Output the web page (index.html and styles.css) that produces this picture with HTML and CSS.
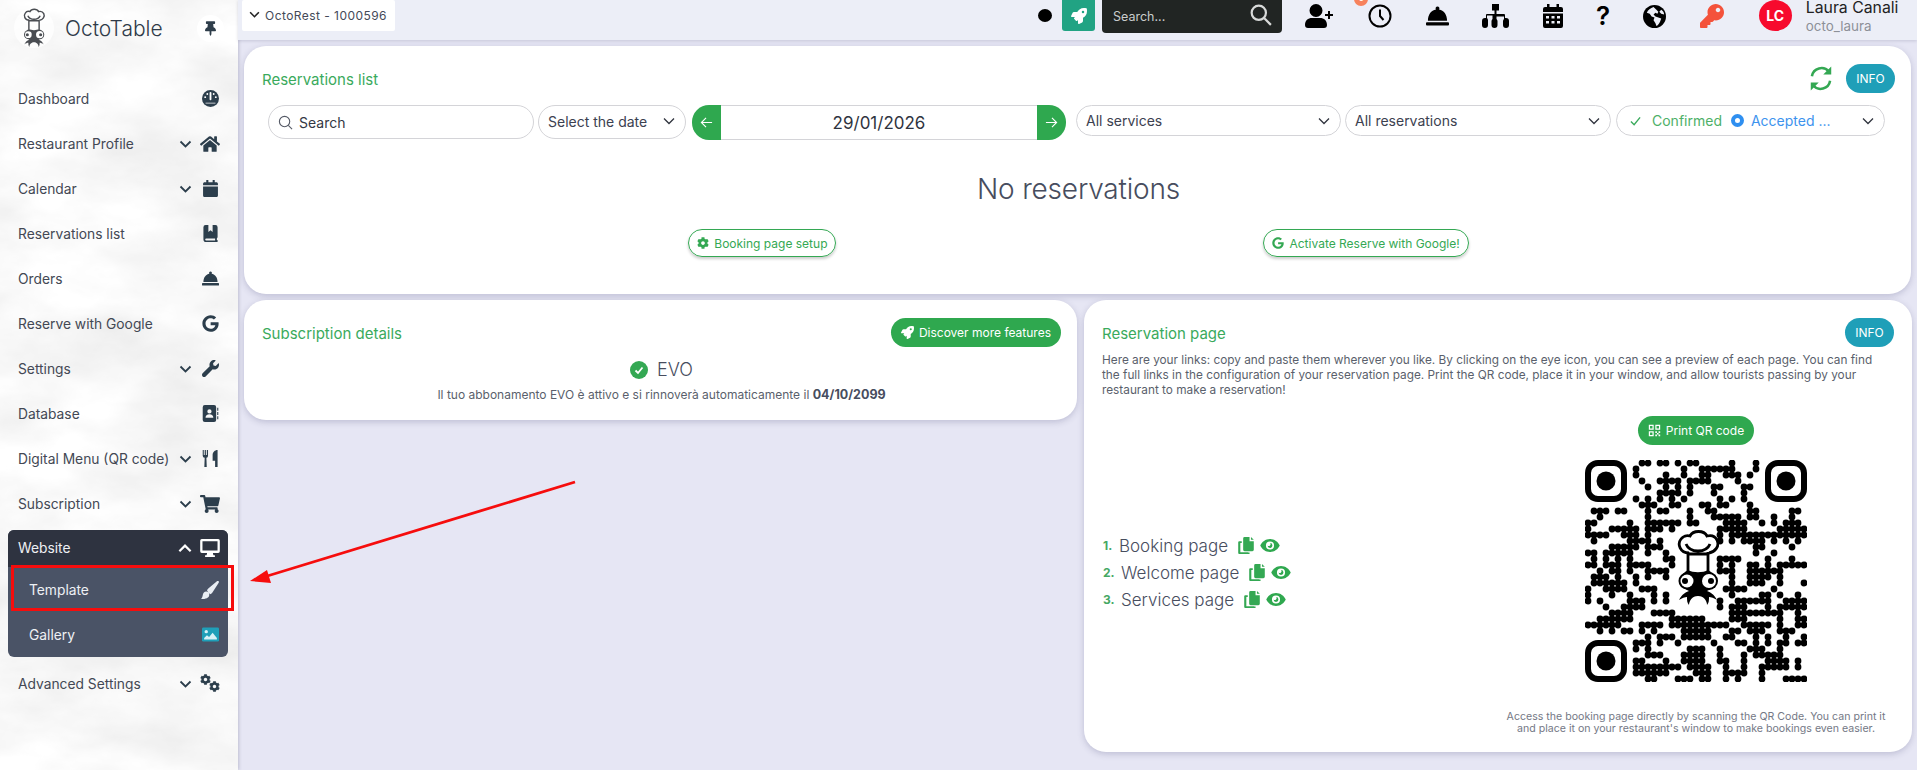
FILE: index.html
```html
<!DOCTYPE html>
<html lang="en">
<head>
<meta charset="utf-8">
<title>OctoTable</title>
<link rel="stylesheet" href="styles.css">
</head>
<body>
<svg class="defs" aria-hidden="true">
  <filter id="photo-grain" x="0" y="0" width="100%" height="100%">
    <feTurbulence type="fractalNoise" baseFrequency="0.008 0.016" numOctaves="5" seed="7"/>
    <feColorMatrix values="0.3 0 0 0 0.79  0.3 0 0 0 0.79  0.3 0 0 0 0.79  0 0 0 0 1"/>
  </filter>
  <symbol id="i-home" viewBox="0 0 576 512"><path d="M280.37 148.26L96 300.11V464a16 16 0 0 0 16 16l112.06-.29a16 16 0 0 0 15.92-16V368a16 16 0 0 1 16-16h64a16 16 0 0 1 16 16v95.64a16 16 0 0 0 16 16.05L464 480a16 16 0 0 0 16-16V300L295.67 148.26a12.19 12.19 0 0 0-15.3 0zM571.6 251.47L488 182.56V44.05a12 12 0 0 0-12-12h-56a12 12 0 0 0-12 12v72.61L318.47 43a48 48 0 0 0-61 0L4.34 251.47a12 12 0 0 0-1.6 16.9l25.5 31A12 12 0 0 0 45.15 301l235.22-193.74a12.19 12.19 0 0 1 15.3 0L530.9 301a12 12 0 0 0 16.9-1.6l25.5-31a12 12 0 0 0-1.7-16.93z"/></symbol>
  <symbol id="i-cal" viewBox="0 0 448 512"><path d="M12 192h424c6.6 0 12 5.4 12 12v260c0 26.5-21.5 48-48 48H48c-26.5 0-48-21.5-48-48V204c0-6.6 5.4-12 12-12zm436-44v-36c0-26.5-21.5-48-48-48h-48V12c0-6.6-5.4-12-12-12h-40c-6.6 0-12 5.4-12 12v52H160V12c0-6.6-5.4-12-12-12h-40c-6.6 0-12 5.4-12 12v52H48C21.5 64 0 85.5 0 112v36c0 6.6 5.4 12 12 12h424c6.6 0 12-5.4 12-12z"/></symbol>
  <symbol id="i-google" viewBox="0 0 488 512"><path d="M488 261.8C488 403.3 391.1 504 248 504 110.8 504 0 393.2 0 256S110.8 8 248 8c66.8 0 123 24.5 166.3 64.9l-67.5 64.9C258.5 52.6 94.3 116.6 94.3 256c0 86.5 69.1 156.6 153.7 156.6 98.2 0 135-70.4 140.8-106.9H248v-85.3h236.1c2.3 12.7 3.9 24.9 3.9 41.4z"/></symbol>
  <symbol id="i-wrench" viewBox="0 0 512 512"><path d="M507.73 109.1c-2.24-9.03-13.54-12.09-20.12-5.51l-74.36 74.36-67.88-11.31-11.31-67.88 74.36-74.36c6.62-6.62 3.43-17.9-5.66-20.16-47.38-11.74-99.55.91-136.58 37.93-39.64 39.64-50.55 97.1-34.05 147.2L18.74 402.76c-24.99 24.99-24.99 65.51 0 90.5 24.99 24.99 65.51 24.99 90.5 0l213.21-213.21c50.12 16.71 107.47 5.68 147.37-34.22 37.07-37.07 49.7-89.32 37.91-136.73z"/></symbol>
  <symbol id="i-cart" viewBox="0 0 576 512"><path d="M528.12 301.319l47.273-208C578.806 78.301 567.391 64 551.99 64H159.208l-9.166-44.81C147.758 8.021 137.93 0 126.529 0H24C10.745 0 0 10.745 0 24v16c0 13.255 10.745 24 24 24h69.883l70.248 343.435C147.325 417.1 136 435.222 136 456c0 30.928 25.072 56 56 56s56-25.072 56-56c0-15.674-6.447-29.835-16.824-40h209.647C430.447 426.165 424 440.326 424 456c0 30.928 25.072 56 56 56s56-25.072 56-56c0-22.172-12.888-41.332-31.579-50.405l5.517-24.276c3.413-15.018-8.002-29.319-23.403-29.319H218.117l-6.545-32h293.145c11.206 0 20.92-7.754 23.403-18.681z"/></symbol>
  <symbol id="i-cog" viewBox="0 0 512 512"><path d="M487.4 315.7l-42.6-24.6c4.3-23.2 4.3-47 0-70.2l42.6-24.6c4.9-2.8 7.1-8.6 5.5-14-11.1-35.6-30-67.8-54.7-94.6-3.8-4.1-10-5.1-14.8-2.3L380.8 110c-17.9-15.4-38.5-27.3-60.8-35.1V25.8c0-5.6-3.9-10.5-9.4-11.7-36.7-8.2-74.3-7.8-109.2 0-5.5 1.2-9.4 6.1-9.4 11.7V75c-22.2 7.9-42.8 19.8-60.8 35.1L88.7 85.5c-4.9-2.8-11-1.9-14.8 2.3-24.7 26.7-43.6 58.9-54.7 94.6-1.7 5.4.6 11.2 5.5 14L67.3 221c-4.3 23.2-4.3 47 0 70.2l-42.6 24.6c-4.9 2.8-7.1 8.6-5.5 14 11.1 35.6 30 67.8 54.7 94.6 3.8 4.1 10 5.1 14.8 2.3l42.6-24.6c17.9 15.4 38.5 27.3 60.8 35.1v49.2c0 5.6 3.9 10.5 9.4 11.7 36.7 8.2 74.3 7.8 109.2 0 5.5-1.2 9.4-6.1 9.4-11.7v-49.2c22.2-7.9 42.8-19.8 60.8-35.1l42.6 24.6c4.9 2.8 11 1.9 14.8-2.3 24.7-26.7 43.6-58.9 54.7-94.6 1.5-5.5-.7-11.3-5.6-14.1zM256 336c-44.1 0-80-35.9-80-80s35.9-80 80-80 80 35.9 80 80-35.9 80-80 80z"/></symbol>
  <symbol id="i-pin" viewBox="0 0 384 512"><path d="M298.028 214.267L285.793 96H328c13.255 0 24-10.745 24-24V24c0-13.255-10.745-24-24-24H56C42.745 0 32 10.745 32 24v48c0 13.255 10.745 24 24 24h42.207L85.972 214.267C37.465 236.82 0 277.261 0 328c0 13.255 10.745 24 24 24h136v104.007c0 1.242.289 2.467.845 3.578l24 48c2.941 5.882 11.364 5.893 14.311 0l24-48a8.008 8.008 0 0 0 .845-3.578V352h136c13.255 0 24-10.745 24-24-.001-51.183-37.983-91.42-85.973-113.733z"/></symbol>
  <symbol id="i-rocket" viewBox="0 0 512 512"><path d="M505.12 19.09c-1.19-5.53-6.66-11-12.21-12.19C460.72 0 435.51 0 410.41 0 307.18 0 245.27 55.2 199.05 128H94.84c-16.35.02-35.56 11.88-42.89 26.48L2.52 253.3A28.4 28.4 0 0 0 0 264a24 24 0 0 0 24 24h103.81l-22.47 22.47c-11.37 11.36-13 32.26 0 45.25l50.9 50.9c11.16 11.19 32.16 13.16 45.28 0L224 384.16V488a24 24 0 0 0 24 24 28.56 28.56 0 0 0 10.71-2.52l98.73-49.39c14.63-7.3 26.5-26.5 26.5-42.86V312.8c72.6-46.31 128.04-108.41 128.04-211.1.09-25.2.09-50.4-6.86-82.61zM384.04 168a40 40 0 1 1 40-40 40 40 0 0 1-40 40z"/></symbol>
  <symbol id="i-key" viewBox="0 0 512 512"><path d="M512 176.001C512 273.203 433.202 352 336 352c-11.22 0-22.19-1.062-32.827-3.069l-24.012 27.014A23.999 23.999 0 0 1 261.223 384H224v40c0 13.255-10.745 24-24 24h-40v40c0 13.255-10.745 24-24 24H24c-13.255 0-24-10.745-24-24v-78.059c0-6.365 2.529-12.47 7.029-16.971l161.802-161.802C163.108 213.814 160 195.271 160 176 160 78.798 238.797.001 335.999 0 433.488-.001 512 78.511 512 176.001zM336 128c0 26.51 21.49 48 48 48s48-21.49 48-48-21.49-48-48-48-48 21.49-48 48z"/></symbol>
  <symbol id="i-bell" viewBox="0 0 24 20"><path d="M12 0a2 2 0 0 1 1.6 3.2C18.600 4 22 8.500 22 15H2C2 8.500 5.400 4 10.400 3.200A2 2 0 0 1 12 0zM1 16.500h22a1 1 0 0 1 1 1V19a1 1 0 0 1-1 1H1a1 1 0 0 1-1-1v-1.500a1 1 0 0 1 1-1z"/></symbol>
  <symbol id="i-dash" viewBox="0 0 24 24"><circle cx="12" cy="12" r="12"/><path d="M12 4v9M7.500 5.500v.1M16.500 5.500v.1M4.500 10v.1M19.500 10v.1" stroke="#fff" stroke-width="2.600" stroke-linecap="round" fill="none" /><path d="M5 19h14v-1H5z" fill="#fff"/></symbol>
  <symbol id="i-book" viewBox="0 0 20 24"><path d="M3 0h4v10l3-2.500 3 2.500V0h4a3 3 0 0 1 3 3v14a2 2 0 0 1-1 1.700V21h1v3H4a4 4 0 0 1-4-4V3a3 3 0 0 1 3-3zM4 19a1.500 1.500 0 0 0 0 3h12.500v-3z"/></symbol>
  <symbol id="i-address" viewBox="0 0 22 24"><path d="M3 0h13a3 3 0 0 1 3 3v18a3 3 0 0 1-3 3H3a3 3 0 0 1-3-3V3a3 3 0 0 1 3-3zm6.500 6a3 3 0 1 0 0 6 3 3 0 0 0 0-6zM4 18h11c0-3-2-5-5.500-5S4 15 4 18z"/><path d="M20.500 4h1.500v4h-1.500zm0 6h1.500v4h-1.500zm0 6h1.500v4h-1.500z"/></symbol>
  <symbol id="i-utensils" viewBox="0 0 22 24"><path d="M0 0h1.500v7h1.300V0h1.700v7h1.300V0H7.500v8a3 3 0 0 1-2.300 3l.5 13H2.300l.5-13A3 3 0 0 1 0 8zM21 0v24h-3.500v-9H14V7c0-4 3-7 7-7z"/></symbol>
  <symbol id="i-desktop" viewBox="0 0 24 22"><path fill-rule="evenodd" d="M2 0h20a2 2 0 0 1 2 2v13a2 2 0 0 1-2 2h-6.500l.7 3h1.800v2H6v-2h1.800l.7-3H2a2 2 0 0 1-2-2V2a2 2 0 0 1 2-2zm.8 2.800v11.400h18.400V2.800z"/></symbol>
  <symbol id="i-brush" viewBox="0 0 24 24"><path d="M23.500.4c.6.5.5 1.500-.1 2.300L15 15.500c-.8 1.100-1.800 1.800-3 2L8 12.700c.3-1.200 1.100-2.100 2.100-2.900L21.200.4c.8-.6 1.700-.5 2.300 0zM7 14c2.500.1 4.200 1.800 4 4.500C10.800 22.500 6.500 24 0 24c1.500-1.500 2-2.800 2.300-5C2.700 16 4.500 14 7 14z"/></symbol>
  <symbol id="i-image" viewBox="0 0 24 20"><rect width="24" height="20" rx="2" fill="#1f9fb8"/><circle cx="6" cy="6" r="2.400" fill="#d8f1f6"/><path d="M3 17v-2l4-4 3 2.500 5-6 6 7.500v2z" fill="#d8f1f6"/></symbol>
  <symbol id="i-copy" viewBox="0 0 22 24"><path d="M9 0h7v6h6v12a2 2 0 0 1-2 2H9a2 2 0 0 1-2-2V2a2 2 0 0 1 2-2zM18 0l4 4h-4z"/><path d="M1.500 6H5v2.500H3v13h11V22h2v2H1.500A1.500 1.500 0 0 1 0 22.500v-15A1.500 1.500 0 0 1 1.500 6z"/></symbol>
  <symbol id="i-eye" viewBox="0 0 24 16"><path fill-rule="evenodd" d="M12 0c5.500 0 10 3.500 12 8-2 4.500-6.500 8-12 8S2 12.500 0 8c2-4.500 6.500-8 12-8zm0 3a5 5 0 1 0 0 10 5 5 0 0 0 0-10zm0 2a3 3 0 1 1-3 3 1.600 1.600 0 0 0 3-3z"/></symbol>
  <symbol id="i-chef" viewBox="0 0 42 78">
    <path d="M12 24C3 24 0 15 4 10c2-3 6-4 9-3 3-6 14-6 17 0 4-1 8 0 10 4 3 6-2 12-8 13" fill="none" stroke="currentColor" stroke-width="2.800"/>
    <path d="M9 15c2 5 6 7 12 7s10-2 12-7M11 23v19M31 23v19M11 25h20" fill="none" stroke="currentColor" stroke-width="2.800"/>
    <path d="M11 41c5 3 15 3 20 0 7 3 9 12 5 17-2 2-4 3-6 4 3 1 7 3 10 9-3-2-6-3-8-3 0 3 0 6-2 8 0-4-3-9-9-9s-9 5-9 9c-2-2-2-5-2-8-2 0-5 1-8 3 3-6 7-8 10-9-2-1-4-2-6-4-4-5-2-14 5-17z" fill="currentColor"/>
    <circle cx="10" cy="52" r="8.500" fill="currentColor"/><circle cx="10" cy="52" r="6.500" fill="#fff"/><circle cx="8" cy="52" r="3" fill="currentColor"/>
    <circle cx="32" cy="52" r="9" fill="currentColor"/><circle cx="32" cy="52" r="7" fill="#fff"/><circle cx="34" cy="52" r="3" fill="currentColor"/>
  </symbol>
</svg>

<div class="app">
  <aside class="sidebar">
    <svg class="side-photo" aria-hidden="true"><rect width="100%" height="100%" filter="url(#photo-grain)"/></svg>
    <div class="brand">
      <span class="brand-mark"><svg class="brand-chef"><use href="#i-chef"/></svg></span>
      <span class="brand-name">OctoTable</span>
      <span class="pin"><svg class="pin-icon"><use href="#i-pin"/></svg></span>
    </div>
    <nav class="nav">
      <a class="nav-item"><span class="nav-label">Dashboard</span><span class="nav-icon"><svg class="ic-17"><use href="#i-dash"/></svg></span></a>
      <a class="nav-item"><span class="nav-label">Restaurant Profile</span><svg class="chev" viewBox="0 0 12 8"><path d="M1 1.500l5 5 5-5"/></svg><span class="nav-icon"><svg class="ic-19"><use href="#i-home"/></svg></span></a>
      <a class="nav-item"><span class="nav-label">Calendar</span><svg class="chev" viewBox="0 0 12 8"><path d="M1 1.500l5 5 5-5"/></svg><span class="nav-icon"><svg class="ic-17"><use href="#i-cal"/></svg></span></a>
      <a class="nav-item"><span class="nav-label">Reservations list</span><span class="nav-icon"><svg class="ic-17"><use href="#i-book"/></svg></span></a>
      <a class="nav-item"><span class="nav-label">Orders</span><span class="nav-icon"><svg class="ic-17"><use href="#i-bell"/></svg></span></a>
      <a class="nav-item"><span class="nav-label">Reserve with Google</span><span class="nav-icon"><svg class="ic-17"><use href="#i-google"/></svg></span></a>
      <a class="nav-item"><span class="nav-label">Settings</span><svg class="chev" viewBox="0 0 12 8"><path d="M1 1.500l5 5 5-5"/></svg><span class="nav-icon"><svg class="ic-17"><use href="#i-wrench"/></svg></span></a>
      <a class="nav-item"><span class="nav-label">Database</span><span class="nav-icon"><svg class="ic-17"><use href="#i-address"/></svg></span></a>
      <a class="nav-item"><span class="nav-label">Digital Menu (QR code)</span><svg class="chev" viewBox="0 0 12 8"><path d="M1 1.500l5 5 5-5"/></svg><span class="nav-icon"><svg class="ic-17"><use href="#i-utensils"/></svg></span></a>
      <a class="nav-item"><span class="nav-label">Subscription</span><svg class="chev" viewBox="0 0 12 8"><path d="M1 1.500l5 5 5-5"/></svg><span class="nav-icon"><svg class="ic-19"><use href="#i-cart"/></svg></span></a>
      <div class="nav-group">
        <a class="group-head"><span class="nav-label">Website</span><svg class="chev chev-light" viewBox="0 0 12 8"><path d="M1 6.500l5-5 5 5"/></svg><span class="nav-icon"><svg class="ic-19"><use href="#i-desktop"/></svg></span></a>
        <a class="group-sub"><span class="nav-label">Template</span><span class="nav-icon"><svg class="ic-18"><use href="#i-brush"/></svg></span></a>
        <a class="group-sub"><span class="nav-label">Gallery</span><span class="nav-icon"><svg class="ic-17"><use href="#i-image"/></svg></span></a>
      </div>
      <a class="nav-item"><span class="nav-label">Advanced Settings</span><svg class="chev" viewBox="0 0 12 8"><path d="M1 1.500l5 5 5-5"/></svg><span class="nav-icon nav-cogs"><svg class="cog-a"><use href="#i-cog"/></svg><svg class="cog-b"><use href="#i-cog"/></svg></span></a>
    </nav>
  </aside>

  <div class="main">
    <header class="topbar">
      <div class="chip"><svg class="chip-chev" viewBox="0 0 12 8"><path d="M1 1.500l5 5 5-5"/></svg>OctoRest - 1000596</div>
      <span class="dot"></span>
      <span class="rocket-btn"><svg class="rocket-ic"><use href="#i-rocket"/></svg></span>
      <div class="top-search"><span>Search...</span><svg class="top-search-ic" viewBox="0 0 20 20"><circle cx="8" cy="8" r="6.500"/><path d="M13 13l6 6"/></svg></div>
      <div class="top-icons">
        <svg class="t-user" viewBox="0 0 30 24"><path d="M11 0a6.500 6.500 0 1 1 0 13 6.500 6.500 0 0 1 0-13zM3 24a3 3 0 0 1-3-3c0-4.500 3-7 7-7h8c4 0 7 2.500 7 7a3 3 0 0 1-3 3z"/><path d="M25 7v3h3v2h-3v3h-2v-3h-3v-2h3V7z"/></svg>
        <span class="t-clock-wrap">
          <span class="badge">0</span>
          <svg class="t-clock" viewBox="0 0 24 24"><circle cx="12" cy="12" r="10.500"/><path d="M12 5.500V12l3.500 4"/></svg>
        </span>
        <svg class="t-bell"><use href="#i-bell"/></svg>
        <svg class="t-map" viewBox="0 0 27 24"><path d="M10 0h7v6.500h-2.500V10H22a1 1 0 0 1 1 1v3h1a3 3 0 0 1 3 3v4a3 3 0 0 1-6 0v-4a3 3 0 0 1 1-2v-2.500h-7.500V15a3 3 0 0 1 1 2v4a3 3 0 0 1-6 0v-4a3 3 0 0 1 1-2v-3.500H5V14a3 3 0 0 1 1 2v5a3 3 0 0 1-6 0v-4a3 3 0 0 1 3-3h1v-3a1 1 0 0 1 1-1h7.500V6.500H10z"/></svg>
        <svg class="t-cal" viewBox="0 0 20 24"><path fill-rule="evenodd" d="M4 0h2.500v3h7V0H16v3h2a2 2 0 0 1 2 2v3H0V5a2 2 0 0 1 2-2h2zM0 9.500h20V22a2 2 0 0 1-2 2H2a2 2 0 0 1-2-2zM3 12v2.500h3V12zm5.500 0v2.500h3V12zm5.500 0v2.500h3V12zM3 17v2.500h3V17zm5.500 0v2.500h3V17zm5.500 0v2.500h3V17z"/></svg>
        <span class="t-help">?</span>
        <svg class="t-globe" viewBox="0 0 24 24"><circle cx="12" cy="12" r="12"/><path d="M11 2c-3 1-6 3-7 6l3 1 2 3 3 1-1 3 2 3 1 3c2-1 3-3 4-5l1-3-3-1-3-1-2-2 2-2 2 1 1-2-2-2zM19 5l-2 2 2 2 3 1c0-2-1-4-3-5z" fill="#eceef7"/></svg>
        <svg class="t-key"><use href="#i-key"/></svg>
      </div>
      <span class="avatar">LC</span>
      <div class="who"><span class="who-name">Laura Canali</span><span class="who-user">octo_laura</span></div>
    </header>

    <div class="content">
      <section class="card card-wide">
        <div class="card-head">
          <h2 class="card-title">Reservations list</h2>
          <div class="card-actions">
            <svg class="refresh" viewBox="2 1 20 22"><path d="M4 10a8.500 8.500 0 0 1 15-4M20 14a8.500 8.500 0 0 1-15 4"/><path class="refresh-tip" d="M21 1.500v7h-7zM3 22.500v-7h7z"/></svg>
            <span class="info">INFO</span>
          </div>
        </div>
        <div class="filters">
          <div class="f-search"><svg class="f-search-ic" viewBox="0 0 16 16"><circle cx="7" cy="7" r="5.500"/><path d="M11 11l4 4"/></svg>Search</div>
          <div class="f-select f-date">Select the date<svg class="f-chev" viewBox="0 0 12 8"><path d="M1 1.500l5 5 5-5"/></svg></div>
          <div class="f-nav">
            <span class="f-arrow f-arrow-l"><svg class="f-arrow-ic" viewBox="0 0 14 14"><path d="M13 7H1.500M6.500 2l-5 5 5 5"/></svg></span>
            <span class="f-day">29/01/2026</span>
            <span class="f-arrow f-arrow-r"><svg class="f-arrow-ic" viewBox="0 0 14 14"><path d="M1 7h11.500M7.500 2l5 5-5 5"/></svg></span>
          </div>
          <div class="f-select f-svc">All services<svg class="f-chev" viewBox="0 0 12 8"><path d="M1 1.500l5 5 5-5"/></svg></div>
          <div class="f-select f-res">All reservations<svg class="f-chev" viewBox="0 0 12 8"><path d="M1 1.500l5 5 5-5"/></svg></div>
          <div class="f-select f-status">
            <svg class="st-check" viewBox="0 0 12 10"><path d="M1 5.500l3.500 3.500L11 1"/></svg>
            <span class="st-ok">Confirmed</span>
            <span class="st-ring"></span>
            <span class="st-acc">Accepted ...</span>
            <svg class="f-chev" viewBox="0 0 12 8"><path d="M1 1.500l5 5 5-5"/></svg>
          </div>
        </div>
        <p class="empty">No reservations</p>
        <div class="setup-row">
          <span class="btn-outline"><svg class="btn-ic-s"><use href="#i-cog"/></svg>Booking page setup</span>
          <span class="btn-outline"><svg class="btn-ic-s"><use href="#i-google"/></svg>Activate Reserve with Google!</span>
        </div>
      </section>

      <section class="card card-sub">
        <div class="card-head">
          <h2 class="card-title">Subscription details</h2>
          <span class="btn-green"><svg class="btn-ic"><use href="#i-rocket"/></svg>Discover more features</span>
        </div>
        <div class="plan"><svg class="plan-check" viewBox="0 0 18 18"><circle cx="9" cy="9" r="9"/><path d="M5.500 9.500l2.500 2.500 4.500-5.500"/></svg>EVO</div>
        <p class="plan-note">Il tuo abbonamento EVO è attivo e si rinnoverà automaticamente il <b>04/10/2099</b></p>
      </section>

      <section class="card card-page">
        <div class="card-head">
          <h2 class="card-title">Reservation page</h2>
          <span class="info">INFO</span>
        </div>
        <p class="page-intro">Here are your links: copy and paste them wherever you like. By clicking on the eye icon, you can see a preview of each page. You can find the full links in the configuration of your reservation page. Print the QR code, place it in your window, and allow tourists passing by your restaurant to make a reservation!</p>
        <div class="page-body">
          <ol class="links">
            <li class="link"><span class="link-n">1.</span><span class="link-t">Booking page</span><svg class="copy"><use href="#i-copy"/></svg><svg class="eye"><use href="#i-eye"/></svg></li>
            <li class="link"><span class="link-n">2.</span><span class="link-t">Welcome page</span><svg class="copy"><use href="#i-copy"/></svg><svg class="eye"><use href="#i-eye"/></svg></li>
            <li class="link"><span class="link-n">3.</span><span class="link-t">Services page</span><svg class="copy"><use href="#i-copy"/></svg><svg class="eye"><use href="#i-eye"/></svg></li>
          </ol>
          <div class="qr-col">
            <span class="btn-green"><svg class="btn-ic" viewBox="0 0 16 16"><path d="M1 1h6v6H1zm1.500 1.500v3h3v-3zM9 1h6v6H9zm1.500 1.500v3h3v-3zM1 9h6v6H1zm1.500 1.500v3h3v-3zM9 9h2v2H9zm4 0h2v2h-2zm-2 2h2v2h-2zm-2 2h2v2H9zm4 0h2v2h-2z"/></svg>Print QR code</span>
            <div class="qr">
              <svg id="qr" class="qr-svg" viewBox="0 0 222 222">
                <g class="finder"><rect x="3" y="3" width="36" height="36" rx="10"/><circle cx="21" cy="21" r="9.500"/></g>
                <g class="finder"><rect x="183" y="3" width="36" height="36" rx="10"/><circle cx="201" cy="21" r="9.500"/></g>
                <g class="finder"><rect x="3" y="183" width="36" height="36" rx="10"/><circle cx="21" cy="201" r="9.500"/></g>
              </svg>
              <svg class="qr-chef"><use href="#i-chef"/></svg>
            </div>
            <p class="qr-note">Access the booking page directly by scanning the QR Code. You can print it<br>and place it on your restaurant's window to make bookings even easier.</p>
          </div>
        </div>
      </section>
    </div>
  </div>
</div>

<div class="mark-box"></div>
<svg class="mark-arrow" viewBox="0 0 340 110"><path d="M325 2L14 97"/><path class="mark-tip" d="M0 101l17-11 4 13z"/></svg>
<script src="qr.js"></script>
</body>
</html>
```

FILE: styles.css
```css
* { box-sizing: border-box; }
html, body { margin: 0; height: 100%; overflow: hidden; }
body { font-family: Inter, "Liberation Sans", sans-serif; color: #474d5e; background: #e6e6f4; }
.defs { position: absolute; width: 0; height: 0; }
.app { display: flex; height: 770px; }
h2, p, ol { margin: 0; padding: 0; }

/* Sidebar */
.sidebar {
  position: relative; width: 238px; flex: none; overflow: hidden;
  box-shadow: 1px 0 3px rgba(70, 70, 110, .25);
  background: #f0f0f0;
}
.side-photo { position: absolute; left: 0; top: 0; width: 238px; height: 770px; }
.brand { position: relative; height: 56px; display: flex; align-items: center; padding: 0 14px; }
.brand-mark { width: 40px; height: 40px; border-radius: 50%; background: rgba(255,255,255,.75); display: flex; justify-content: center; margin-right: 11px; flex: none; }
.brand-chef { width: 24px; height: 40px; color: #4a4d52; }
.brand-name { flex: 1; font-size: 21px; font-weight: 300; color: #2f3a48; margin-top: 1px; }
.pin { width: 27px; height: 27px; border-radius: 50%; background: #fff; display: flex; align-items: center; justify-content: center; }
.pin-icon { width: 11px; height: 15px; fill: #2e3d4a; }
.nav { position: relative; padding-top: 20px; font-size: 13.800px; color: #434854; }
.nav-item { height: 45px; display: flex; align-items: center; padding: 0 14px 0 18px; }
.nav-label { flex: 1; white-space: nowrap; }
.nav-icon { width: 28px; display: flex; justify-content: center; align-items: center; fill: #2c3e4c; margin-left: 4px; }
.ic-17 { width: 17px; height: 17px; }
.ic-18 { width: 18px; height: 18px; }
.ic-19 { width: 20px; height: 18px; }
.chev { width: 13px; height: 8px; fill: none; stroke: #2c3e4c; stroke-width: 1.800; }
.chev-light { stroke: #fff; width: 14px; height: 9px; stroke-width: 2; }
.nav-cogs { position: relative; height: 20px; }
.cog-a { position: absolute; left: 4px; top: 0; width: 11px; height: 11px; }
.cog-b { position: absolute; left: 13px; top: 7px; width: 11px; height: 11px; }
.nav-group { margin: 3.500px 10px 4px 8px; background: #4a5366; border-radius: 6px; color: #eef0f4; overflow: hidden; }
.group-head { height: 37.500px; background: #2e3340; display: flex; align-items: center; padding: 0 4px 0 10px; fill: #fff; }
.group-head .nav-icon { fill: #fff; }
.group-sub { height: 45px; display: flex; align-items: center; padding: 0 4px 0 21px; }
.group-sub .nav-icon { fill: #e9edf3; }

/* Topbar */
.main { flex: 1; min-width: 0; display: flex; flex-direction: column; }
.topbar { height: 40px; flex: none; background: #eceef7; box-shadow: 0 1px 3px rgba(70,70,110,.2); display: flex; padding: 0 10px 0 4px; position: relative; }
.chip { width: 153px; height: 31px; background: #fff; display: flex; align-items: center; font-size: 12px; letter-spacing: .45px; color: #444a58; padding-left: 7px; border-radius: 2px; }
.chip-chev { width: 11px; height: 7px; fill: none; stroke: #222; stroke-width: 1.800; margin-right: 5px; margin-top: -3px; }
.dot { width: 14px; height: 13px; border-radius: 50%; background: #000; margin: 9px 0 0 643px; }
.rocket-btn { width: 33px; height: 31px; margin-left: 10px; background: #21a383; border-radius: 0 0 3px 3px; display: flex; align-items: center; justify-content: center; }
.rocket-ic { width: 16px; height: 16px; fill: #fff; }
.top-search { width: 180px; height: 33px; margin-left: 7px; background: #212523; border-radius: 0 0 4px 4px; display: flex; align-items: center; justify-content: space-between; padding: 0 10px 0 11px; color: #c9cccc; font-size: 12.500px; }
.top-search-ic { width: 22px; height: 22px; fill: none; stroke: #d8dad9; stroke-width: 2; margin-top: -3px; }
.top-icons { margin-left: 23px; height: 32px; display: flex; align-items: center; gap: 33.400px; fill: #000; }
.t-user { width: 30px; height: 24px; }
.t-clock-wrap { position: relative; width: 24px; height: 24px; }
.t-clock { width: 24px; height: 24px; fill: none; stroke: #000; stroke-width: 2; }
.badge { position: absolute; left: -14px; top: -12px; width: 14px; height: 14px; border-radius: 50%; background: #f7825c; color: #fff; font-size: 9px; line-height: 12px; text-align: center; }
.t-bell { width: 23px; height: 20px; }
.t-map { width: 27px; height: 24px; }
.t-cal { width: 20px; height: 24px; }
.t-help { width: 14px; font-size: 26px; font-weight: 600; color: #000; line-height: 24px; text-align: center; }
.t-globe { width: 23px; height: 23px; }
.t-key { width: 24px; height: 24px; fill: #f4523b; }
.avatar { width: 33px; height: 31px; margin-left: 35px; border-radius: 50%; background: #f70a2d; color: #fff; font-weight: 700; font-size: 14px; display: flex; align-items: center; justify-content: center; flex: none; }
.who { margin-left: 14px; display: flex; flex-direction: column; white-space: nowrap; }
.who-name { font-size: 15.800px; line-height: 16px; color: #222; }
.who-user { font-size: 13.400px; line-height: 20px; color: #8d9098; }

/* Content */
.content { display: grid; grid-template-columns: 833px 828px; column-gap: 7px; row-gap: 6px; grid-template-rows: auto auto 1fr; padding: 6px 0 18px 6px; flex: 1; min-height: 0; }
.card { background: #fff; border-radius: 22px; box-shadow: 0 2px 6px rgba(70,70,120,.25); padding: 18px 16px 18px 18px; }
.card-wide { grid-column: 1 / 3; width: 1667px; padding-bottom: 37px; }
.card-sub { grid-column: 1; grid-row: 2; align-self: start; height: 120px; }
.card-page { grid-column: 2; grid-row: 2 / 4; padding-right: 18px; }
.card-head { display: flex; align-items: center; justify-content: space-between; height: 29px; }
.card-title { font-size: 15px; font-weight: 400; color: #3aaa5c; white-space: nowrap; margin-top: 1px; }
.card-actions { display: flex; align-items: center; gap: 13px; }
.refresh { width: 24px; height: 25px; fill: none; stroke: #34a853; stroke-width: 2.200; }
.refresh-tip { fill: #34a853; stroke: none; }
.info { width: 49px; height: 29px; border-radius: 15px; background: #1f9fb8; color: #fff; font-size: 12px; display: flex; align-items: center; justify-content: center; }

/* Filters */
.filters { display: flex; margin: 12px 10px 0 6px; font-size: 14px; color: #3c4150; align-items: flex-start; }
.f-search { width: 266px; height: 34px; border: 1px solid #d4d4d8; border-radius: 17px; display: flex; align-items: center; padding-left: 9px; gap: 6px; color: #333844; }
.f-search-ic { width: 15px; height: 15px; fill: none; stroke: #555a66; stroke-width: 1.200; }
.f-select { height: 31px; border: 1px solid #d4d4d8; border-radius: 16px; display: flex; align-items: center; padding: 0 9px; justify-content: space-between; }
.f-chev { width: 14px; height: 8px; fill: none; stroke: #30343e; stroke-width: 1.300; flex: none; }
.f-date { width: 148px; height: 34px; margin-left: 4px; border-radius: 17px; padding-bottom: 2px; }
.f-nav { width: 374px; height: 35px; margin-left: 6px; display: flex; }
.f-arrow { width: 29px; background: #2fa84f; display: flex; align-items: center; justify-content: center; flex: none; }
.f-arrow-l { border-radius: 17px 0 0 17px; }
.f-arrow-r { border-radius: 0 17px 17px 0; }
.f-arrow-ic { width: 13px; height: 13px; fill: none; stroke: #fff; stroke-width: 1.200; }
.f-day { flex: 1; text-align: center; font-size: 17px; line-height: 34px; border: 1px solid #d4d4d8; border-width: 1px 0; color: #2f3440; }
.f-svc { width: 265px; margin-left: 10px; }
.f-res { width: 266px; margin-left: 4px; }
.f-status { width: 269px; margin-left: 5px; justify-content: flex-start; padding-left: 13px; }
.f-status .f-chev { margin-left: auto; }
.st-check { width: 11px; height: 10px; fill: none; stroke: #3aaa5c; stroke-width: 1.500; margin-right: 11px; }
.st-ok { color: #4eb068; }
.st-ring { width: 13px; height: 13px; border-radius: 50%; border: 4px solid #2f8ff0; margin: 0 7px 0 9px; }
.st-acc { color: #3d93ee; }
.empty { text-align: center; font-size: 28px; line-height: 34px; margin-top: 32px; color: #474d5e; font-weight: 300; letter-spacing: -.2px; }
.setup-row { display: flex; justify-content: center; gap: 427px; margin-top: 23px; }
.btn-outline { height: 28px; border: 1px solid #34a853; border-radius: 14px; display: inline-flex; align-items: center; gap: 5px; padding: 0 8px; font-size: 12px; color: #34a853; box-shadow: 0 2px 3px rgba(0,0,0,.2); white-space: nowrap; }
.btn-ic-s { width: 12px; height: 12px; fill: #34a853; }
.btn-green { height: 29px; border-radius: 15px; background: #2fa84f; color: #fff; font-size: 12px; display: inline-flex; align-items: center; gap: 5px; padding: 0 10px; white-space: nowrap; }
.btn-ic { width: 13px; height: 13px; fill: #fff; }
.plan { display: flex; align-items: center; justify-content: center; gap: 9px; font-size: 18px; line-height: 24px; margin-top: 11px; color: #474d5e; font-weight: 300; }
.plan-check { width: 18px; height: 18px; }
.plan-check circle { fill: #34a853; }
.plan-check path { fill: none; stroke: #fff; stroke-width: 1.800; }
.plan-note { text-align: center; font-size: 12px; line-height: 15px; margin-top: 5px; color: #5a5f6c; }
.plan-note b { color: #474d5e; font-size: 12.500px; }

/* Reservation page */
.page-intro { font-size: 11.800px; line-height: 15px; margin-top: 6px; color: #5a5f6c; padding-right: 12px; }
.page-body { display: grid; grid-template-columns: 1fr 380px; padding-right: 8px; margin-top: 17.500px; }
.links { list-style: none; align-self: center; margin-bottom: 5px; }
.link { height: 27px; display: flex; align-items: center; padding-left: 1px; }
.link-n { width: 18px; font-size: 12px; font-weight: 700; color: #45a863; }
.link:first-child .link-t { margin-left: -2px; }
.link-t { font-size: 17px; color: #474d5e; font-weight: 300; }
.copy { width: 16px; height: 17px; fill: #34a853; margin-left: 10px; }
.eye { width: 20px; height: 13px; fill: #2fa84f; margin-left: 6px; }
.qr-col { display: flex; flex-direction: column; align-items: center; }
.qr { position: relative; width: 222px; height: 222px; margin-top: 15px; }
.qr-svg { width: 222px; height: 222px; display: block; }
.qr-svg circle { fill: #000; }
.finder rect { fill: none; stroke: #000; stroke-width: 6; }
.qr-chef { position: absolute; left: 92px; top: 69px; width: 42px; height: 78px; color: #000; }
.qr-note { margin-top: 29px; text-align: center; font-size: 10.600px; line-height: 12px; color: #747885; white-space: nowrap; }

/* Annotation */
.mark-box { position: absolute; left: 11px; top: 565px; width: 223px; height: 46px; border: 3px solid #f60d0d; }
.mark-arrow { position: absolute; left: 250px; top: 480px; width: 340px; height: 110px; fill: none; stroke: #f60d0d; stroke-width: 2.800; }
.mark-tip { fill: #f60d0d; stroke: none; }
```

FILE: qr.js
```js
var rows = [
  "9-10 12-13 15 17-18 24 28",
  "8 16 19-24 28",
  "8 13 16 19-20 23-25 27",
  "9 12-15 17-20 25",
  "10 13 15 17 21-22 26-27",
  "12-15 17 21 26",
  "8 10 12 14 16 22 24 26",
  "9-11 14-15 19-20 22-23 27",
  "1-3 5-6 10 12-13 17 20-21 27-28 34-35",
  "2 10 17 21-25 27-28 31 34",
  "0-1 7 10-15 17-18 23-26 29 31 33-35",
  "0 4-8 10-12 14 22-26 32-36",
  "0-3 6-8 10 22 24-36",
  "1 7-10 12 22 24 26-29 31 33 35",
  "4-8 10-12 28-29 34",
  "0-1 3-7 10 13 28 31",
  "1 3 5 7 13-14 22-25 30 34",
  "0-1 3-5 7-10 14 22 24 27-28 30 32-36",
  "2 4-5 7 10-13 22-24 27-32",
  "1-3 5 8 10 13 24 27-30 32",
  "1-6 8 24 27-29 32 36",
  "0 3-6 9-11 23-26 31",
  "0 4 7 11 13 24 29-30 32 35",
  "0 2 7-9 11 13 22 25-30 33-36",
  "3 6-9 22 24-26 30 32-36",
  "4-7 11-14 24-32 35",
  "2-7 14-19 24-26 32 35-36",
  "0-5 9-12 14-23 26-30 32 35-36",
  "2 4 6-7 9 11 16-20 24-25 27-29 32-34",
  "10 12-14 16-20 23-24 28 30 33 36",
  "8-10 12 15 21 25-26 28 30 32-33 35-36",
  "8 10 17-19 22 27-29 32",
  "10-12 16-19 22 26 28-32",
  "8-9 13 16-19 22-23 26 30-33 35",
  "8-15 17-20 23 26 29-33 35",
  "8-13 18-20 23-26 29",
  "10-11 15-17 19-20 23 25 29 33-36"
];
var svg = document.getElementById("qr");
rows.forEach(function (row, r) {
  row.split(" ").forEach(function (part) {
    var ends = part.split("-").map(Number);
    var last = ends.length > 1 ? ends[1] : ends[0];
    for (var c = ends[0]; c <= last; c++) {
      if (c >= 15 && c <= 21 && r >= 11 && r <= 24) continue;
      var dot = document.createElementNS("http://www.w3.org/2000/svg", "circle");
      dot.setAttribute("cx", 3 + c * 6);
      dot.setAttribute("cy", 3 + r * 6);
      dot.setAttribute("r", 3.4);
      svg.appendChild(dot);
    }
  });
});
```
